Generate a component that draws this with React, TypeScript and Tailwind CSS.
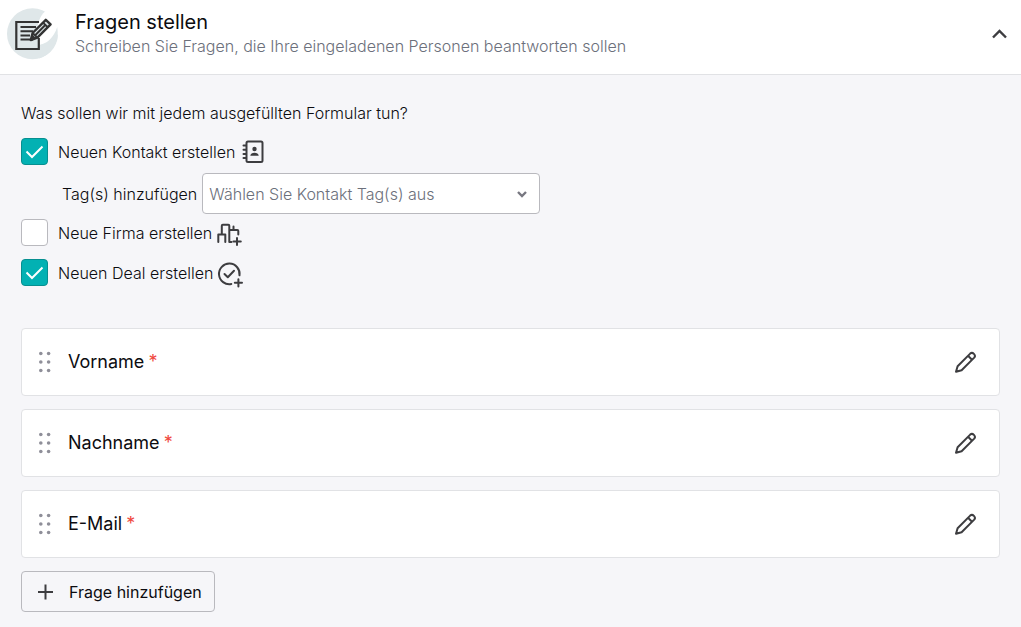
import { useState, type ReactNode } from "react";

function FormLogo() {
  return (
    <svg width="52" height="52" viewBox="0 0 52 52" fill="none" aria-hidden="true">
      <circle cx="25.5" cy="25.8" r="25.5" fill="#dfe7e9" />
      <path d="M38 3.5 L52 3.5 L52 24 C49 30 43 35 33 37 L30 24 C30 16 33 8 38 3.5 Z" fill="#fff" />
      <path d="M50.2 19 C53 35 44 47 32 50.5 L30 37 C40 37 47 29 50.2 19 Z" fill="#dfe7e9" />
      <path d="M32 14 H9.3 V41 H31.8 V30" stroke="#333" strokeWidth="2.2" />
      <path d="M13.5 19 H29 M13.5 23.2 H26 M13.5 27.4 H23 M13.5 31.6 H26" stroke="#333" strokeWidth="2" />
      <path
        d="M23.8 32 L25.6 25 L38.8 11.8 L43.6 16.4 L30.4 29.6 Z"
        fill="#dfe7e9"
        stroke="#333"
        strokeWidth="2.4"
        strokeLinejoin="round"
      />
      <path d="M36 14.6 L40.8 19.2 M28.2 27.2 L38.3 17 M25.6 25 L30.4 29.6" stroke="#333" strokeWidth="2" />
      <path d="M23.8 32 L25.4 26.4 L29.2 30.2 Z" fill="#333" />
    </svg>
  );
}

function ContactIcon() {
  return (
    <svg width="24" height="28" viewBox="0 0 24 28" fill="none" stroke="#3d3d40" strokeWidth="2" aria-hidden="true">
      <rect x="6.5" y="4.5" width="16" height="20.5" rx="1.5" />
      <path d="M3.5 8.5 H6 M3.5 12.7 H6 M3.5 16.9 H6 M3.5 21.1 H6" strokeLinecap="round" />
      <circle cx="14.5" cy="12" r="2.2" fill="#3d3d40" stroke="none" />
      <path d="M10.3 18.7 C10.3 14.6 18.7 14.6 18.7 18.7 Z" fill="#3d3d40" stroke="none" />
    </svg>
  );
}

function CompanyIcon() {
  return (
    <svg
      width="26"
      height="28"
      viewBox="0 0 26 28"
      fill="none"
      stroke="#3d3d40"
      strokeWidth="2"
      strokeLinecap="round"
      strokeLinejoin="round"
      aria-hidden="true"
    >
      <path d="M1.3 24 V16.5 H8.3 V24 M4.8 16.5 V7.8 Q4.8 6.8 5.8 6.8 H11.3 Q12.3 6.8 12.3 7.8 V24 H14.5 M12.3 12 H20.3 Q21.3 12 21.3 13 V16.5 M16.5 8.5 V12" />
      <path d="M20 20 V27 M16.4 23.5 H23.8" />
    </svg>
  );
}

function DealIcon() {
  return (
    <svg
      width="26"
      height="28"
      viewBox="0 0 26 28"
      fill="none"
      stroke="#3d3d40"
      strokeWidth="2"
      strokeLinecap="round"
      strokeLinejoin="round"
      aria-hidden="true"
      className="overflow-visible"
    >
      <path d="M13.3 26 A10.3 10.3 0 1 1 21.5 17.3" />
      <path d="M6.5 16 L9.8 19.2 L16 12.8" />
      <path d="M20.4 21.2 V28.4 M16.8 24.8 H24" />
    </svg>
  );
}

function PencilIcon() {
  return (
    <svg
      width="24"
      height="24"
      viewBox="0 0 24 24"
      fill="none"
      stroke="#3d3d40"
      strokeWidth="2"
      strokeLinejoin="round"
      aria-hidden="true"
    >
      <path d="M3 21.8 L4.6 16.2 L17.2 3.6 C19.6 1.4 23.4 5.2 21.2 7.6 L8.6 20.2 Z" />
      <path d="M15 5.8 L19 9.8" />
    </svg>
  );
}

function DragDots() {
  return (
    <svg width="12" height="22" viewBox="0 0 12 22" fill="#8f8f99" aria-hidden="true">
      {[2.5, 11, 19.5].map((y) => (
        <g key={y}>
          <circle cx="1.8" cy={y} r="1.8" />
          <circle cx="9.6" cy={y} r="1.8" />
        </g>
      ))}
    </svg>
  );
}

function Option({
  label,
  icon,
  initial,
}: {
  label: string;
  icon: ReactNode;
  initial: boolean;
}) {
  const [checked, setChecked] = useState(initial);
  return (
    <label className="flex h-7 w-fit items-center">
      <span className="grid shrink-0">
        <input
          type="checkbox"
          checked={checked}
          onChange={(e) => setChecked(e.target.checked)}
          className="col-start-1 row-start-1 size-[27px] appearance-none rounded border border-[#b9b9be] bg-white checked:border-[#078f90] checked:bg-[#02b1b3]"
        />
        {checked && (
          <svg
            className="pointer-events-none col-start-1 row-start-1"
            width="27"
            height="27"
            viewBox="0 0 27 27"
            fill="none"
            stroke="#fff"
            strokeWidth="2"
            aria-hidden="true"
          >
            <path d="M5.5 13.5 L11 19 L21.5 8.5" />
          </svg>
        )}
      </span>
      <span className="mr-[5px] ml-2.5 pt-0.5">{label}</span>
      {icon}
    </label>
  );
}

const questions = ["Vorname", "Nachname", "E-Mail"];

export default function App() {
  const [open, setOpen] = useState(true);
  return (
    <main className="min-h-screen bg-[#f6f6f9] font-['Inter','Liberation_Sans',sans-serif] text-base font-light text-[#0c0c10]">
      <header className="flex items-start border-b border-[#e1e2e5] bg-white pt-2 pr-3 pb-[14px] pl-[7px]">
        <FormLogo />
        <div className="ml-4 grow pt-0.5">
          <h1 className="text-xl leading-6 font-normal">Fragen stellen</h1>
          <p className="leading-6 text-[#6c707b]">
            Schreiben Sie Fragen, die Ihre eingeladenen Personen beantworten sollen
          </p>
        </div>
        <button
          type="button"
          className="self-center"
          aria-label="Abschnitt umschalten"
          aria-expanded={open}
          onClick={() => setOpen(!open)}
        >
          <svg width="20" height="20" viewBox="0 0 20 20" fill="none" stroke="#3d3d40" strokeWidth="2.4" aria-hidden="true">
            <path d={open ? "M4 13.5 L10.5 7 L17 13.5" : "M4 7 L10.5 13.5 L17 7"} />
          </svg>
        </button>
      </header>

      {open && (
        <div className="px-[21px] pt-[26px] pb-4">
          <p className="leading-6">Was sollen wir mit jedem ausgefüllten Formular tun?</p>
          <div className="mt-3">
            <Option label="Neuen Kontakt erstellen" icon={<ContactIcon />} initial />
            <div className="mt-2 mb-1 ml-[41px] flex items-center gap-[5px]">
              <label htmlFor="tags">Tag(s) hinzufügen</label>
              <div className="grid w-[338px] items-center">
                <select
                  id="tags"
                  className="col-start-1 row-start-1 h-[41px] w-full appearance-none rounded border border-[#b9b9be] bg-white px-1.5 text-[#6c707b]"
                >
                  <option>Wählen Sie Kontakt Tag(s) aus</option>
                </select>
                <svg
                  className="pointer-events-none col-start-1 row-start-1 mr-[13px] justify-self-end"
                  width="10"
                  height="8"
                  viewBox="0 0 10 8"
                  fill="none"
                  stroke="#777780"
                  strokeWidth="2.4"
                  aria-hidden="true"
                >
                  <path d="M1 2 L5 6 L9 2" />
                </svg>
              </div>
            </div>
            <div className="flex flex-col gap-3">
              <Option label="Neue Firma erstellen" icon={<CompanyIcon />} initial={false} />
              <Option label="Neuen Deal erstellen" icon={<DealIcon />} initial />
            </div>
          </div>

          <ul className="mt-[42px] flex flex-col gap-[13px]">
            {questions.map((q) => (
              <li
                key={q}
                className="flex h-[68px] items-center rounded border border-[#e1e2e5] bg-white pr-[22px] pl-[17px] text-lg font-normal"
              >
                <DragDots />
                <span className="ml-[17px] grow">
                  {q} <span className="-ml-px text-[#f0483e]">*</span>
                </span>
                <button type="button" aria-label={`${q} bearbeiten`}>
                  <PencilIcon />
                </button>
              </li>
            ))}
          </ul>

          <button
            type="button"
            className="mt-[13px] flex h-[41px] items-center gap-[15px] rounded border border-[#b9b9be] pr-3 pl-[14px] font-normal"
          >
            <svg width="18" height="18" viewBox="0 0 18 18" fill="none" stroke="#3d3d40" strokeWidth="2" aria-hidden="true">
              <path d="M9.5 1.5 V16.5 M2 9 H17" />
            </svg>
            Frage hinzufügen
          </button>
        </div>
      )}
    </main>
  );
}
